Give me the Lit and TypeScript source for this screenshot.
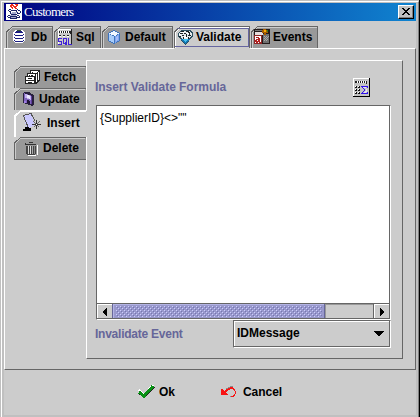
import { LitElement, html, svg, css } from "lit";
import { customElement, property } from "lit/decorators.js";

const p = (d: string, fill: string) => svg`<path d=${d} fill=${fill}></path>`;
const l = (d: string, stroke: string, w = 1) => svg`<path d=${d} fill="none" stroke=${stroke} stroke-width=${w}></path>`;

// Every icon is drawn in whole-pixel units on its own small grid.
const icons: Record<string, { w: number; h: number; body: unknown }> = {
  java: { w: 16, h: 16, body: [
    p("M0 0h16v16H0z", "#fff"),
    p("M5 0h2v1H5zM9 0h3v1H9zM4 1h4v1H4zM10 1h2v1h-2zM4 2h2v1H4zM7 2h4v1H7zM5 3h2v1H5zM8 3h2v1H8zM6 4h1v1H6zM9 4h2v1H9z", "#ee2c20"),
    p("M3 5h2v1H3zM11 5h1v1h-1zM2 6h1v1H2zM5 6h6v1H5zM12 6h2v1h-2zM3 7h2v1H3zM10 7h1v1h-1zM14 7h1v2h-1zM4 8h1v2H4zM11 8h1v2h-1zM12 9h2v1h-2zM5 10h6v1H5zM2 11h2v1H2zM11 11h2v1h-2zM1 12h1v1H1zM4 12h7v1H4zM13 12h1v1h-1zM2 13h3v1H2zM10 13h4v1h-4zM4 14h7v1H4z", "#1c2468"),
    p("M6 8h5v1H6zM5 9h5v1H5zM4 11h6v1H4zM5 13h5v1H5z", "#a5abcc")] },
  db: { w: 13, h: 14, body: [
    p("M2 0h8v1h1v1h1v9h-1v1h-1v1H2v-1H1v-1H0V2h1V1h1z", "#fff"),
    p("M3 1h6v1h1v1H2V2h1zM1 4h1v1h8V4h1v1h-1v1H2V5H1zM1 7h1v1h8V7h1v1h-1v1H2V8H1zM1 10h1v1h8v-1h1v1h-1v1H2v-1H1z", "#181c80"),
    p("M4 0h4v1H4z", "#345434")] },
  sql: { w: 14, h: 16, body: [
    p("M0 0h14v16H0z", "#c8c8c8"),
    p("M0 0h14v1H0z", "#fff"),
    p("M1 2h12v3h-1V4H1zM13 0h1v16h-1zM1 6h2v1H1zM5 6h2v1H5zM9 6h2v1H9z", "#222"),
    p("M2 2h1v2H2zM4 2h1v2H4zM6 2h1v2H6zM8 2h1v2H8zM10 2h1v2h-1zM0 0h1v16H0zM1 7h2v1H1zM5 7h2v1H5zM9 7h2v1H9z", "#fff"),
    p("M1 9h3v1H1v2h3v4H0v-1h3v-2H0V9zM5 9h4v6H5zM6 10v4h2v-4zM7 13h1v2h1v1H7zM10 9h1v6h3v1h-4z", "#4020d8")] },
  cube: { w: 13, h: 14, body: [
    p("M6 0L12 3v8l-6 3l-6-3V3z", "#3f74bd"),
    p("M6 1l5 2.5L7 6L1 3.5z", "#f2f8ff"),
    p("M1 4l5 2.5V13l-5-2.5z", "#a9cdfa"),
    p("M7 6.5L11 4v6.5L7 13z", "#80a8ee"),
    p("M8 7l2-1v4L8 11z", "#a6bbfb")] },
  diamond: { w: 15, h: 15, body: [
    p("M3 0h9l3 3v3L8 15h-1L0 6V3z", "#2c5060"),
    p("M3 1h8l3 3v1l-3 4H4L1 5V3z", "#e4ebee"),
    p("M3 1h3v2H3zM6 6h3v2H6zM9 3h2v1H9zM1 4h2v1H1z", "#fff"),
    p("M3 1h3v1H3zM8 1h3v1H8zM2 3h3v1H2zM6 3h2v1H6zM10 2h2v1h-2zM4 5h2v1H4zM8 4h1v3H8zM10 5h3v1h-3zM5 7h1v2H5zM11 3h1v2h-1zM1 6h2v1H1zM10 7h1v2h-1z", "#1c2225"),
    p("M3 9h9l-4 5H7z", "#1176b4"),
    p("M5 9h5l-3 3z", "#45c2ef")] },
  events: { w: 16, h: 16, body: [
    p("M0 0h16v15H0z", "#241c1c"),
    p("M1 1h8v1H1z", "#777"), p("M1 3h8v3H1z", "#e8dede"),
    p("M9 5h6v9H9z", "#707070"), p("M10 7h1v1h-1zM12 7h1v1h-1zM14 7h1v1h-1zM11 8h1v1h-1zM13 8h1v1h-1zM10 9h1v1h-1zM12 9h1v1h-1zM11 10h1v1h-1zM13 10h1v1h-1zM10 11h1v1h-1zM12 11h1v1h-1z", "#a8a8a8"),
    p("M1 6h7v9H1z", "#fff"), l("M.5 6.5h7v8h-7z", "#8d2828"),
    p("M2 8h3v1h1v4h1v1H5v-1H4v1H2v-1H1v-2h1v-1h2V9H2zM3 11v1h1v-1z", "#b32222"),
    p("M9 0h3v1h2v3h-2v2h-2V4H8V1h1z", "#a85b00"), p("M10 1h2v2h-2z", "#f7b000"), p("M13 1h1v2h-1z", "#2d8420")] },
  fetch: { w: 15, h: 14, body: [
    p("M5 0h9l1 1v10h-1v1h-1v1h-1v1H0V6h2V3h3z", "#222"),
    p("M6 1h7v1H6zM6 2h1v1H6zM3 4h7v1H3zM1 7h8v3H1zM1 11h8v2H1zM11 4h1v8h-1zM3 5h1v1H3zM13 2h1v8h-1zM5 5h5v1H5zM8 2h4v1H8z", "#fff"),
    p("M3 8h4v1H3zM3 12h4v1H3zM6 5h2v1H6z", "#222")] },
  update: { w: 11, h: 14, body: [
    p("M1 0h5l5 3v9l-2 2L0 11V1z", "#28203d"),
    p("M1 1l8 3v8l-8-2z", "#8065bd"), p("M2 2l6 2v4L2 6z", "#c3b3ec"), p("M4 3l3 1v3L4 6z", "#ece8ff"),
    p("M4 8l3 1v3L4 11z", "#201536"), p("M8 4h1v8H8z", "#5c3b99"), p("M1 9h2v2H1z", "#9f7be5")] },
  insert: { w: 19, h: 19, body: [
    p("M0 2L8 0l4 12l-8 4z", "#c9c8ff"),
    l("M.5 2.5L8 .5L12 8M.5 3L5 14", "#555"),
    p("M2 14h4v1h2v3H0v-2h2z", "#000"),
    l("M13.5 7v9M9 11.5h9", "#333"), l("M10.5 8.5l6 6M16.5 8.5l-6 6", "#666"), p("M13 11h1v1h-1z", "#fff")] },
  trash: { w: 13, h: 14, body: [
    p("M12 3h1v10h-2v1H3v-1h9z", "#fff"),
    p("M4 0h4v1h3v2H0V1h4z", "#333"), p("M1 1h10v1H1z", "#999"),
    p("M1 4h10v8h-1v1H2v-1H1z", "#444"),
    p("M3 4h1v8H3zM5 4h1v8H5z", "#ddd"), p("M7 4h1v8H7z", "#aaa"), p("M9 4h1v8H9z", "#888")] },
  calc: { w: 17, h: 19, body: [
    p("M0 0h17v19H0z", "#fff"), p("M1 18h16V0h-1v18H0v1h17v-1z", "#000"), p("M1 1h15v17H1z", "#c4c4c4"),
    p("M2 3h12v3h-1V5H2z", "#222"), p("M4 3h1v2H4zM6 3h1v2H6zM8 3h1v2H8zM10 3h1v2h-1zM12 3h1v2h-1z", "#fff"),
    p("M2 8h2v2H2zM5 8h2v2H5zM2 11h2v2H2zM5 11h2v2H5zM2 14h2v2H2zM5 14h2v2H5z", "#111"),
    p("M2 8h1v1H2zM5 8h1v1H5zM2 11h1v1H2zM5 11h1v1H5zM2 14h1v1H2zM5 14h1v1H5z", "#fff"),
    p("M10 9h3v1h-3zM11 10h2v3h-1v1h-1v1h2v-1h1v-3z", "#e4e4ee"),
    p("M8 8h7v2h-1V9h-4v1h1v1h1v2h-1v1h-1v1h4v-1h1v2H8v-1h1v-1h1v-1h1v-2h-1v-1H9V9H8z", "#3010ed")] },
  check: { w: 17, h: 15, body: [
    l("M1 6l5 5L15 1", "#fff", 2),
    l("M1 9l5 4L16 3", "#222", 2), l("M1 8l5 4L15 2", "#079014", 3)] },
  undo: { w: 15, h: 12, body: [
    p("M5 2h2V1h2V0h3v1H9v1H7v1H5zM9 10h2v1H9z", "#8a8a8a"),
    p("M0 3h2v1h1v1h1V4h1V3h2V2h2V1h3v1h1v1h1v2h1v3h-1v2h-1v1h-3v-1h2V9h1V8h1V5h-1V4h-1V3H9v1H7v1H6v1H5v1h1v1h1v1H0z", "#f71414")] },
};

@customElement("pixel-icon")
class PixelIcon extends LitElement {
  static styles = css`:host { display: block; flex: none; } svg { display: block; }`;
  @property() name = "db";
  render() {
    const i = icons[this.name];
    return html`<svg width=${i.w} height=${i.h} viewBox="0 0 ${i.w} ${i.h}" shape-rendering="crispEdges">${i.body}</svg>`;
  }
}

// A notched tab: outline, bevel highlight and an icon with its label.
@customElement("metal-tab")
class MetalTab extends LitElement {
  static styles = css`
    :host { display: block; position: relative; flex: none; }
    .shape { position: absolute; inset: 0; display: block; }
    .row { position: relative; display: flex; align-items: flex-start; height: 100%; }
    .label { white-space: nowrap; line-height: 14px; }
  `;
  @property({ type: Number }) w = 50;
  @property({ type: Number }) h = 22;
  @property({ type: Number }) ix = 7;
  @property({ type: Number }) iy = 4;
  @property({ type: Number }) tx = 24;
  @property({ type: Number }) ty = 4;
  @property() icon = "";
  @property() label = "";
  @property({ type: Boolean }) side = false;
  @property({ type: Boolean }) selected = false;
  render() {
    const { w, h, selected: s, side } = this;
    const iw = icons[this.icon].w;
    const light = s ? "#fff" : "#ccc";
    const bottom = s && !side ? h + 1 : h;
    return html`
      <svg class="shape" width=${w} height=${bottom} shape-rendering="crispEdges">
        ${p(`M0 6L6 0H${w}V${bottom}H0z`, s ? "#ccc" : "#999")}
        ${l(`M1.5 ${h}V6.5L6.5 1.5H${w - 1}`, light)}
        ${s && !side ? l(`M.5 ${h - 1.5}V5.5L3.5 2.5H${w - 1.5}V${h - 1.5}z`, "#6666a0") : ""}
        ${l(`M.5 ${h}V6L6.5 .5H${w}`, s && side ? "#fff" : "#666")}
        ${side ? "" : l(`M${w - 0.5} 0V${h}`, "#666")}
      </svg>
      <div class="row" style="width:${w}px;height:${h}px">
        <pixel-icon name=${this.icon} style="margin:${this.iy}px 0 0 ${this.ix}px"></pixel-icon>
        <span class="label" style="margin:${this.ty}px 0 0 ${this.tx - this.ix - iw}px">${this.label}</span>
      </div>`;
  }
}

@customElement("app-root")
class AppRoot extends LitElement {
  static styles = css`
    :host { display: block; width: 420px; height: 417px; overflow: hidden; font: bold 12px/14px "Liberation Sans", Arial, sans-serif; color: #000; }
    * { box-sizing: border-box; }
    .window { height: 417px; background: #c0c0c0; border-left: 1px solid #c0c0c0; border-right: 1px solid #000; padding-top: 1px; }
    .edge { height: 416px; border: solid; border-width: 1px 1px 0; border-color: #fff #808080 #fff #fff; padding: 1px 2px 2px; }
    .titlebar { height: 18px; display: flex; align-items: center; padding: 0 2px; background: linear-gradient(90deg, #000080, #1084d0); }
    .title { flex: 1; margin-left: 2px; color: #fff; font: 13px/16px "Liberation Serif", serif; letter-spacing: -0.68px; }
    .close { width: 16px; height: 14px; padding: 2px 3px; background: #c0c0c0; border: 1px solid; border-color: #fff #000 #000 #fff; box-shadow: inset -1px -1px #808080; }
    .close svg { display: block; }
    .content { background: #ccc; height: 394px; padding-top: 5px; }
    .tabs { display: flex; height: 22px; padding-left: 2px; gap: 1px; }
    .tabs metal-tab { z-index: 1; }
    .page { height: 322px; border: 1px solid; border-color: #fff #666 #666 #fff; padding: 11px 12px 10px 9px; display: flex; }
    .side { width: 72px; padding-top: 6px; flex: none; }
    .side metal-tab.open { width: 73px; z-index: 1; }
    .panel { flex: 1; height: 299px; border: 1px solid; border-color: #fff #666 #666 #fff; padding: 16px 11px 0 9px; }
    .caption { display: flex; justify-content: space-between; align-items: flex-start; height: 28px; padding-right: 21px; color: #666699; }
    .heading { margin: 3px 0 0 -1px; letter-spacing: -.04px; }
    .caption pixel-icon { margin-top: 1px; }
    .area { width: 295px; height: 215px; border: 1px solid; border-color: #666 #fff #fff #666; background: #fff; display: flex; flex-direction: column; box-shadow: inset -1px 0 #666; }
    .formula { flex: 1; padding: 5px 3px; font-weight: normal; }
    .scroll { height: 16px; display: flex; border: solid #666; border-width: 1px 1px 1px 0; background: #ccc; }
    .arrow { width: 15px; height: 14px; flex: none; display: flex; align-items: center; justify-content: center; border: 1px solid #fff; border-width: 1px 0 0 1px; }
    .thumb { width: 213px; height: 14px; border: 1px solid #666699; border-width: 0 1px; background: #9999cc; flex: none; padding: 2px 2px 1px 3px; box-shadow: inset 1px 1px #b4b4e6; }
    .grip { display: block; }
    .track { flex: 1; border-right: 1px solid #666; box-shadow: inset 1px 1px #999; }
    .bottom { display: flex; justify-content: space-between; height: 28px; width: 295px; color: #666699; }
    .bottom .heading { margin-top: 7px; letter-spacing: -.24px; }
    .combo { width: 158px; height: 28px; color: #000; border: 1px solid; border-color: #666 #fff #fff #666; box-shadow: inset -1px -1px #666, inset 1px 1px #fff; display: flex; justify-content: space-between; padding: 5px 6px 0 3px; }
    .combo svg { margin-top: 5px; }
    .actions { display: flex; padding: 14px 0 0 134px; }
    .action { display: flex; align-items: flex-start; }
    .action span { margin-top: 1px; }
    .ok { width: 83px; gap: 4px; }
    .cancel { gap: 7px; letter-spacing: -.05px; }
    .cancel pixel-icon { margin-top: 2px; }
  `;
  render() {
    return html`
      <div class="window"><div class="edge">
        <div class="titlebar">
          <pixel-icon name="java"></pixel-icon><span class="title">Customers</span>
          <div class="close"><svg width="8" height="7" shape-rendering="crispEdges">${p("M0 0h2v1h1v1h2V1h1V0h2v1H7v1H6v1H5v1h1v1h1v1h1v1H6V6H5V5H3v1H2v1H0V6h1V5h1V4h1V3H2V2H1V1H0z", "#000")}</svg></div>
        </div>
        <div class="content">
          <div class="tabs">
            <metal-tab w="47" icon="db" label="Db" ix="7" iy="4" tx="25"></metal-tab>
            <metal-tab w="47" icon="sql" label="Sql" ix="4" iy="3" tx="22"></metal-tab>
            <metal-tab w="71" icon="cube" label="Default" ix="6" iy="4" tx="23"></metal-tab>
            <metal-tab w="76" icon="diamond" label="Validate" ix="4" iy="4" tx="22" selected></metal-tab>
            <metal-tab w="67" icon="events" label="Events" ix="3" iy="3" tx="22"></metal-tab>
          </div>
          <div class="page">
            <div class="side">
              <metal-tab side w="72" h="22" icon="fetch" label="Fetch" ix="11" iy="4" tx="30"></metal-tab>
              <metal-tab side w="72" h="22" icon="update" label="Update" ix="9" iy="4" tx="25"></metal-tab>
              <metal-tab side selected class="open" w="73" h="27" icon="insert" label="Insert" ix="9" iy="3" tx="33" ty="6"></metal-tab>
              <metal-tab side w="72" h="22" icon="trash" label="Delete" ix="11" iy="5" tx="29"></metal-tab>
              <svg width="72" height="1" style="display:block">${p("M0 0h72v1H0z", "#666")}</svg>
            </div>
            <div class="panel">
              <div class="caption"><span class="heading">Insert Validate Formula</span><pixel-icon name="calc"></pixel-icon></div>
              <div class="area">
                <div class="formula">{SupplierID}&lt;&gt;""</div>
                <div class="scroll">
                  <div class="arrow"><svg width="4" height="8" shape-rendering="crispEdges">${p("M3 0h1v8H3V7H2V6H1V5H0V3h1V2h1V1h1z", "#000")}</svg></div>
                  <div class="thumb"><svg class="grip" width="206" height="11" shape-rendering="crispEdges">
                    <defs><pattern id="bumps" width="4" height="4" patternUnits="userSpaceOnUse">
                      ${p("M0 0h1v1H0zM2 2h1v1H2z", "#ccccff")}${p("M1 1h1v1H1zM3 3h1v1H3z", "#7676b4")}
                    </pattern></defs><rect width="206" height="11" fill="url(#bumps)"></rect></svg></div>
                  <div class="track"></div>
                  <div class="arrow"><svg width="4" height="8" shape-rendering="crispEdges">${p("M0 0h1v1h1v1h1v1h1v2H3v1H2v1H1v1H0z", "#000")}</svg></div>
                </div>
              </div>
              <div class="bottom"><span class="heading">Invalidate Event</span>
                <div class="combo"><span>IDMessage</span><svg width="10" height="5" shape-rendering="crispEdges">${p("M0 0h10v1H9v1H8v1H7v1H6v1H4V4H3V3H2V2H1V1H0z", "#000")}</svg></div>
              </div>
            </div>
          </div>
          <div class="actions">
            <div class="action ok"><pixel-icon name="check"></pixel-icon><span>Ok</span></div>
            <div class="action cancel"><pixel-icon name="undo"></pixel-icon><span>Cancel</span></div>
          </div>
        </div>
      </div></div>`;
  }
}
